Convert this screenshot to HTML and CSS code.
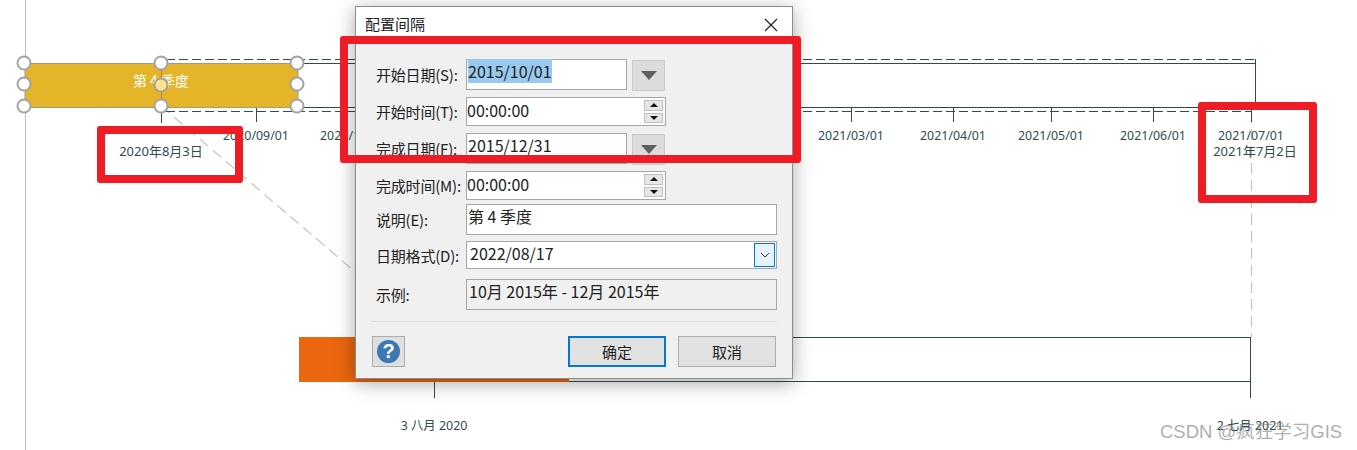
FILE: index.html
```html
<!DOCTYPE html>
<html lang="zh-CN">
<head>
    <meta charset="UTF-8">
    <title>配置间隔</title>
    <link rel="stylesheet" href="styles.css">
</head>
<body>
    <div class="canvas">
        <svg class="timeline" width="1357" height="450" viewBox="0 0 1357 450">
            <line class="axis-rule" x1="25.5" y1="0" x2="25.5" y2="450"/>
            <line class="guide" x1="161" y1="106" x2="360" y2="276"/>
            <line class="guide" x1="1251.5" y1="112" x2="1251.5" y2="337"/>

            <line class="line" x1="298" y1="63.5" x2="1255" y2="63.5"/>
            <line class="line" x1="298" y1="107.5" x2="1255" y2="107.5"/>
            <line class="line" x1="1255.5" y1="59" x2="1255.5" y2="108"/>
            <line class="dash" x1="166" y1="59.5" x2="1255" y2="59.5"/>
            <line class="dash" x1="166" y1="111.5" x2="1251" y2="111.5"/>

            <line class="line" x1="161.5" y1="112" x2="161.5" y2="123"/>
            <line class="line" x1="256.5" y1="108" x2="256.5" y2="122"/>
            <line class="line" x1="851.5" y1="108" x2="851.5" y2="122"/>
            <line class="line" x1="953.5" y1="108" x2="953.5" y2="122"/>
            <line class="line" x1="1051.5" y1="108" x2="1051.5" y2="122"/>
            <line class="line" x1="1153.5" y1="108" x2="1153.5" y2="122"/>
            <line class="line" x1="1251.5" y1="108" x2="1251.5" y2="122"/>

            <text class="tick" x="256" y="140">2020/09/01</text>
            <text class="tick" x="353" y="140">2020/10/01</text>
            <text class="tick" x="851" y="140">2021/03/01</text>
            <text class="tick" x="953" y="140">2021/04/01</text>
            <text class="tick" x="1051" y="140">2021/05/01</text>
            <text class="tick" x="1153" y="140">2021/06/01</text>
            <text class="tick" x="1251" y="140">2021/07/01</text>
            <text class="tick tick-date" x="161" y="156">2020年8月3日</text>
            <text class="tick tick-date" x="1255" y="156">2021年7月2日</text>

            <rect class="bar" x="25" y="63.5" width="273" height="44"/>
            <text class="bar-text" x="161" y="86">第 4 季度</text>
            <line class="stem" x1="161.5" y1="70" x2="161.5" y2="100"/>
            <circle class="handle" cx="24" cy="63" r="6.5"/>
            <circle class="handle" cx="24" cy="84" r="6.5"/>
            <circle class="handle" cx="24" cy="106" r="6.5"/>
            <circle class="handle" cx="161" cy="63" r="6.5"/>
            <circle class="handle" cx="161" cy="106" r="6.5"/>
            <circle class="handle" cx="297" cy="63" r="6.5"/>
            <circle class="handle" cx="297" cy="84" r="6.5"/>
            <circle class="handle" cx="297" cy="106" r="6.5"/>
            <circle class="handle handle-yellow" cx="161" cy="85" r="6.5"/>

            <rect class="progress" x="299" y="337" width="270" height="45"/>
            <line class="line" x1="569" y1="337.5" x2="1250" y2="337.5"/>
            <line class="line" x1="569" y1="381.5" x2="1250" y2="381.5"/>
            <line class="line" x1="1250.5" y1="337" x2="1250.5" y2="398"/>
            <line class="line" x1="434.5" y1="382" x2="434.5" y2="398"/>
            <text class="tick" x="434" y="430">3 八月 2020</text>
            <text class="tick" x="1250" y="430">2 七月 2021</text>
        </svg>

        <div class="dialog">
            <div class="title-bar">
                <span class="title">配置间隔</span>
                <svg class="close" width="14" height="14" viewBox="0 0 14 14">
                    <path d="M1 1 L13 13 M13 1 L1 13" fill="none" stroke="#222" stroke-width="1.2"/>
                </svg>
            </div>
            <div class="dialog-body">
                <div class="row row-date row-first">
                    <label class="field-label">开始日期(S):</label>
                    <div class="input input-date input-tall"><span class="selected">2015/10/01</span></div>
                    <button class="drop-btn"><span class="drop-arrow"></span></button>
                </div>
                <div class="row">
                    <label class="field-label">开始时间(T):</label>
                    <div class="input input-time">
                        00:00:00
                        <div class="spinner">
                            <span class="spin"><span class="spin-up"></span></span>
                            <span class="spin"><span class="spin-down"></span></span>
                        </div>
                    </div>
                </div>
                <div class="row row-date">
                    <label class="field-label">完成日期(F):</label>
                    <div class="input input-date input-tall">2015/12/31</div>
                    <button class="drop-btn"><span class="drop-arrow"></span></button>
                </div>
                <div class="row">
                    <label class="field-label">完成时间(M):</label>
                    <div class="input input-time">
                        00:00:00
                        <div class="spinner">
                            <span class="spin"><span class="spin-up"></span></span>
                            <span class="spin"><span class="spin-down"></span></span>
                        </div>
                    </div>
                </div>
                <div class="row row-desc">
                    <label class="field-label">说明(E):</label>
                    <div class="input input-wide input-tall">第 4 季度</div>
                </div>
                <div class="row row-format">
                    <label class="field-label">日期格式(D):</label>
                    <div class="input input-wide input-combo">
                        2022/08/17
                        <span class="combo-btn">
                            <svg width="10" height="6" viewBox="0 0 10 6"><path d="M1 1 L5 5 L9 1" fill="none" stroke="#333" stroke-width="1"/></svg>
                        </span>
                    </div>
                </div>
                <div class="row row-sample">
                    <label class="field-label">示例:</label>
                    <div class="input input-wide input-tall input-readonly">10月 2015年 - 12月 2015年</div>
                </div>
                <div class="divider"></div>
                <div class="actions">
                    <button class="help-btn">
                        <span class="help-icon">?</span>
                    </button>
                    <div class="action-buttons">
                        <button class="btn btn-default">确定</button>
                        <button class="btn">取消</button>
                    </div>
                </div>
            </div>
        </div>

        <div class="mark mark-dialog"></div>
        <div class="mark mark-start"></div>
        <div class="mark mark-end"></div>
        <div class="watermark">CSDN @疯狂学习GIS</div>
    </div>
</body>
</html>
```

FILE: styles.css
```css
* {
    box-sizing: border-box;
}

body {
    margin: 0;
    background: #fff;
    font-family: "Noto Sans CJK SC", "Noto Sans", sans-serif;
    color: #222;
}

.canvas {
    position: relative;
    width: 1357px;
    height: 450px;
    overflow: hidden;
}

.timeline {
    position: absolute;
    left: 0;
    top: 0;
}

.axis-rule {
    stroke: #bdbdbd;
    stroke-width: 1;
}

.guide {
    stroke: #c4c4c4;
    stroke-width: 1.2;
    stroke-dasharray: 11 6;
}

.line {
    stroke: #2f4b52;
    stroke-width: 1;
}

.dash {
    stroke: #2f4b52;
    stroke-width: 1;
    stroke-dasharray: 9 4;
}

.stem {
    stroke: #c8752a;
    stroke-width: 1;
}

.tick {
    font-family: "Noto Sans", "Noto Sans CJK SC", sans-serif;
    font-size: 12.4px;
    fill: #2f4b52;
    text-anchor: middle;
}

.tick-date {
    font-size: 13px;
}

.bar {
    fill: #e4b429;
    stroke: #a59a7c;
    stroke-width: 1;
}

.bar-text {
    font-size: 14px;
    fill: #fff;
    text-anchor: middle;
}

.handle {
    fill: #fff;
    stroke: #a3a3a3;
    stroke-width: 2;
}

.handle-yellow {
    fill: #fbe48e;
}

.progress {
    fill: #ec6610;
}

.dialog {
    position: absolute;
    left: 355px;
    top: 6px;
    width: 438px;
    height: 373px;
    border: 1px solid #8c8c8c;
    background: #f0f0f0;
    box-shadow: 0 4px 18px rgba(0, 0, 0, 0.35);
}

.title-bar {
    display: flex;
    align-items: center;
    justify-content: space-between;
    height: 37px;
    padding: 0 14px 0 9px;
    background: #fff;
}

.title {
    font-size: 15px;
    line-height: 20px;
    padding-bottom: 3px;
}

.close {
    margin-bottom: 2px;
}

.dialog-body {
    padding: 15px 15px 0 20px;
}

.row {
    display: flex;
    align-items: center;
    margin-top: 7px;
}

.row-date {
    height: 31px;
}

.row-first {
    margin-top: 0;
}

.row-desc {
    margin-top: 4px;
}

.row-format {
    margin-top: 6px;
}

.row-sample {
    margin-top: 10px;
}

.field-label {
    width: 90px;
    flex: none;
    font-size: 15px;
    letter-spacing: -0.2px;
    white-space: nowrap;
}

.input {
    position: relative;
    flex: none;
    height: 29px;
    padding: 0 1px;
    border: 1px solid #a6a6a6;
    background: #fff;
    font-size: 16px;
    line-height: 24px;
    white-space: nowrap;
}

.input-tall {
    height: 31px;
    line-height: 22px;
}

.input-date {
    width: 161px;
}

.input-time {
    width: 200px;
    padding-left: 0;
}

.input-wide {
    width: 311px;
}

.input-combo {
    height: 28px;
    padding-left: 3px;
    line-height: 23px;
}

.input-readonly {
    padding-left: 2px;
    background: #f0f0f0;
}

.selected {
    background: #99c9ef;
}

.drop-btn {
    flex: none;
    align-self: flex-start;
    width: 33px;
    height: 31px;
    margin: 1px 0 0 5px;
    padding: 0;
    display: flex;
    align-items: center;
    justify-content: center;
    border: 1px solid #cacaca;
    background: #dcdcdc;
}

.drop-arrow {
    width: 0;
    height: 0;
    border-left: 8px solid transparent;
    border-right: 8px solid transparent;
    border-top: 9px solid #606060;
}

.spinner {
    position: absolute;
    right: 2px;
    top: 2px;
    display: flex;
    flex-direction: column;
    gap: 2px;
}

.spin {
    display: flex;
    align-items: center;
    justify-content: center;
    width: 19px;
    height: 10.5px;
    border: 1px solid #c0c0c0;
    background: #e6e6e6;
}

.spin-up {
    border-left: 4px solid transparent;
    border-right: 4px solid transparent;
    border-bottom: 4px solid #111;
}

.spin-down {
    border-left: 4px solid transparent;
    border-right: 4px solid transparent;
    border-top: 4px solid #111;
}

.combo-btn {
    position: absolute;
    right: 1px;
    top: 1px;
    width: 21px;
    height: 24px;
    display: flex;
    align-items: center;
    justify-content: center;
    border: 1px solid #0078d7;
    background: #e5f1fb;
}

.divider {
    height: 1px;
    margin: 11px 0 0 -5px;
    background: #e0e0e0;
}

.actions {
    display: flex;
    justify-content: space-between;
    margin: 14px 1px 0 -4px;
}

.help-btn {
    width: 33px;
    height: 31px;
    padding: 0;
    display: flex;
    align-items: center;
    justify-content: center;
    border: 1px solid #adadad;
    background: #dfdfdf;
}

.help-icon {
    width: 23px;
    height: 23px;
    border-radius: 50%;
    background: #3d78b6;
    color: #fff;
    font-family: "Liberation Sans", sans-serif;
    font-size: 20px;
    font-weight: bold;
    line-height: 23px;
    text-align: center;
}

.action-buttons {
    display: flex;
    gap: 12px;
}

.btn {
    width: 98px;
    height: 31px;
    padding: 0;
    border: 1px solid #adadad;
    background: #e1e1e1;
    color: #222;
    font-family: inherit;
    font-size: 15px;
}

.btn-default {
    border: 2px solid #0078d7;
}

.mark {
    position: absolute;
    border: 8px solid #ee1c25;
    border-radius: 3px;
}

.mark-dialog {
    left: 340px;
    top: 36px;
    width: 461px;
    height: 127px;
}

.mark-start {
    left: 97px;
    top: 126px;
    width: 146px;
    height: 57px;
}

.mark-end {
    left: 1198px;
    top: 102px;
    width: 119px;
    height: 101px;
}

.watermark {
    position: absolute;
    left: 1160px;
    top: 419px;
    font-family: "Liberation Sans", "Noto Sans CJK SC", sans-serif;
    font-size: 18.5px;
    line-height: 26px;
    color: rgba(120, 120, 120, 0.62);
    white-space: nowrap;
}
```
